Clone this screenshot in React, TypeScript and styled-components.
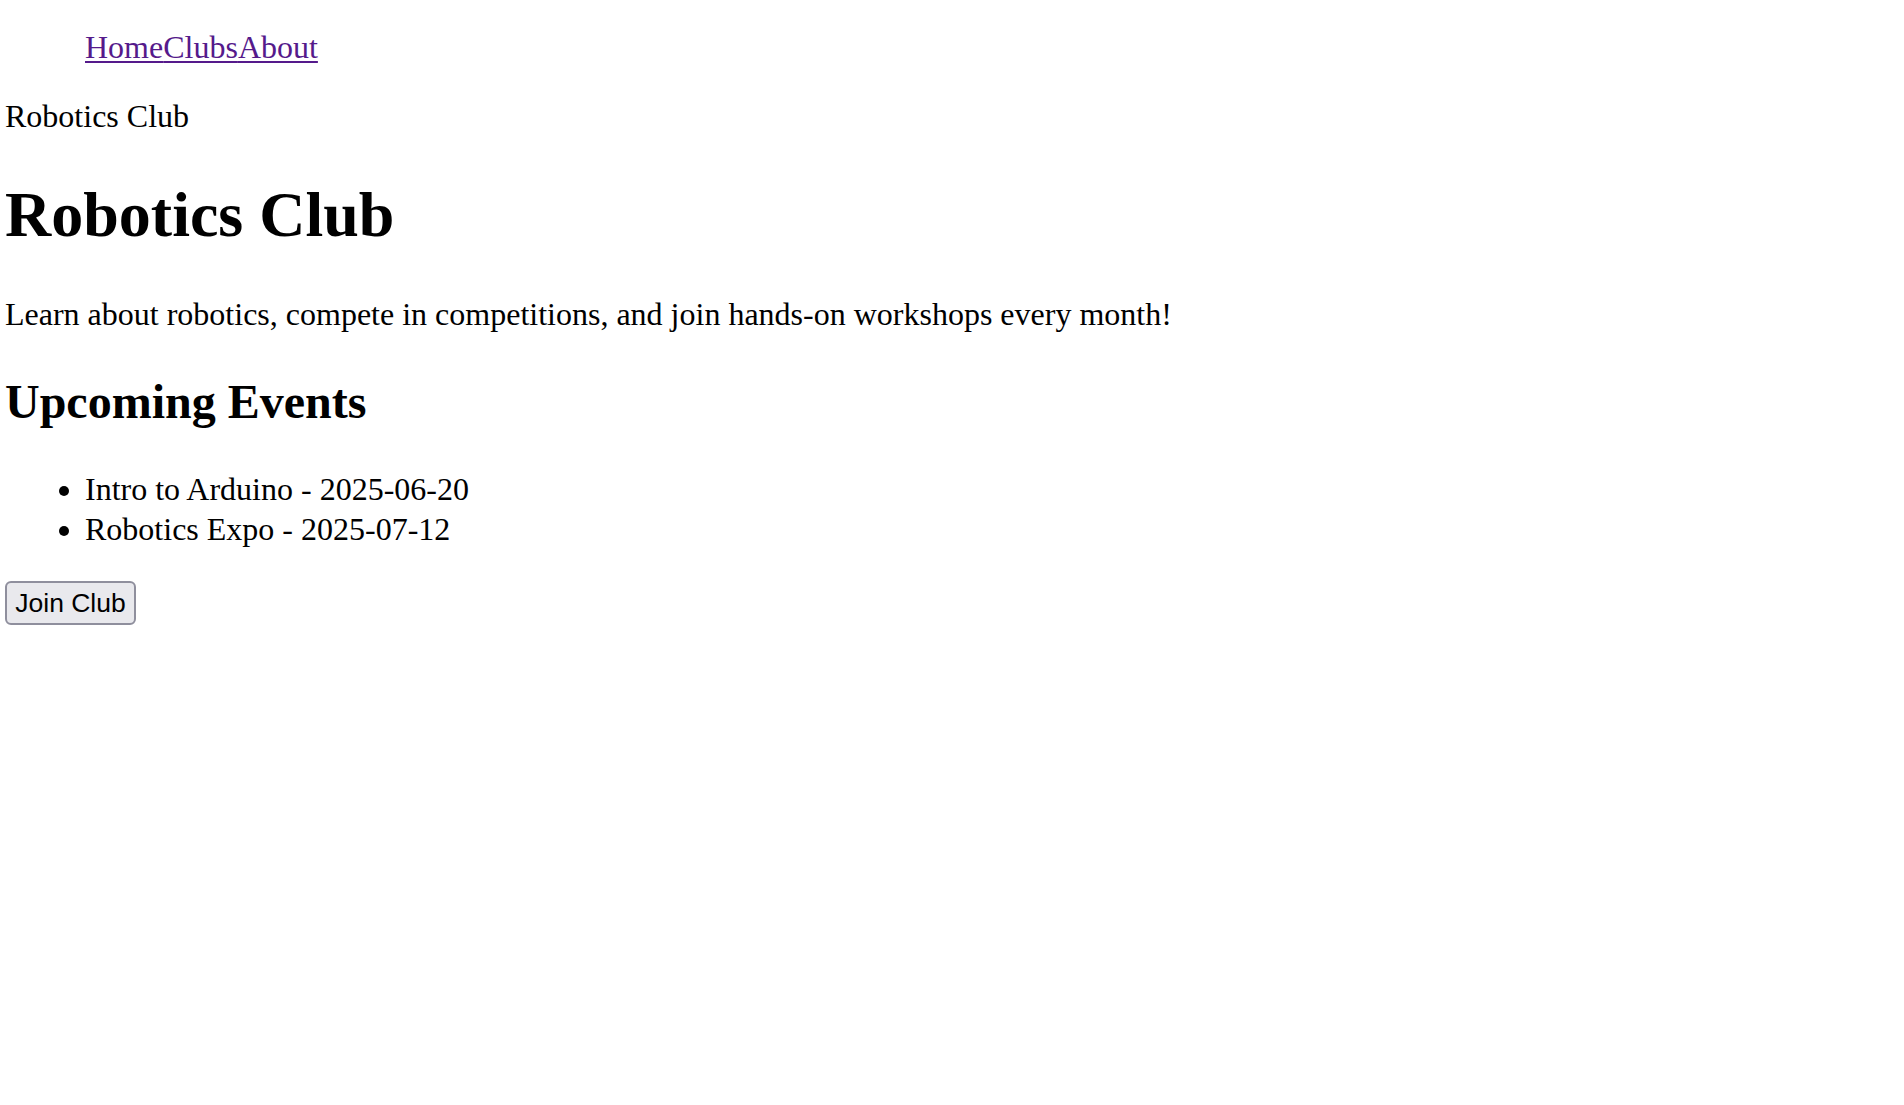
import React from "react";
import styled, { createGlobalStyle } from "styled-components";

const GlobalStyle = createGlobalStyle`
  html, body {
    margin: 0;
    padding: 0;
    background: #ffffff;
  }
  body {
    font-family: "Liberation Serif", "Times New Roman", serif;
    font-size: 32px;
    color: #000000;
  }
`;

const Page = styled.div`
  padding: 29px 0 0 5px;
`;

const NavList = styled.ul`
  display: flex;
  list-style: none;
  margin: 0;
  padding: 0 0 0 80px;
  line-height: normal;
`;

const NavItem = styled.li`
  margin: 0;
`;

const NavLink = styled.a`
  color: #551a8b;
  text-decoration: underline;
  text-decoration-thickness: 2px;
  text-underline-offset: 3px;
  cursor: pointer;
`;

const Brand = styled.div`
  margin-top: 32px;
  line-height: normal;
`;

const Title = styled.h1`
  font-size: 64px;
  font-weight: bold;
  margin: 43px 0 44px;
  line-height: normal;
`;

const Description = styled.p`
  margin: 0;
  line-height: normal;
`;

const SectionTitle = styled.h2`
  font-size: 48px;
  font-weight: bold;
  margin: 41px 0 40px;
  line-height: normal;
`;

const EventList = styled.ul`
  margin: 0 0 32px;
  padding-left: 80px;
  list-style: disc;
`;

const EventItem = styled.li`
  line-height: 40px;
`;

const JoinButton = styled.button`
  display: block;
  width: 131px;
  height: 44px;
  padding: 0;
  font-family: "Liberation Sans", Arial, sans-serif;
  font-size: 26.5px;
  color: #000000;
  background: #e9e9ed;
  border: 2px solid #8f8f9d;
  border-radius: 6px;
  cursor: pointer;
`;

const links = ["Home", "Clubs", "About"];
const events = [
  { name: "Intro to Arduino", date: "2025-06-20" },
  { name: "Robotics Expo", date: "2025-07-12" },
];

export default function App() {
  return (
    <>
      <GlobalStyle />
      <Page>
        <nav>
          <NavList>
            {links.map((l) => (
              <NavItem key={l}>
                <NavLink href="#">{l}</NavLink>
              </NavItem>
            ))}
          </NavList>
        </nav>
        <Brand>Robotics Club</Brand>
        <Title>Robotics Club</Title>
        <Description>
          Learn about robotics, compete in competitions, and join hands-on workshops every month!
        </Description>
        <SectionTitle>Upcoming Events</SectionTitle>
        <EventList>
          {events.map((e) => (
            <EventItem key={e.name}>
              {e.name} - {e.date}
            </EventItem>
          ))}
        </EventList>
        <JoinButton type="button">Join Club</JoinButton>
      </Page>
    </>
  );
}
